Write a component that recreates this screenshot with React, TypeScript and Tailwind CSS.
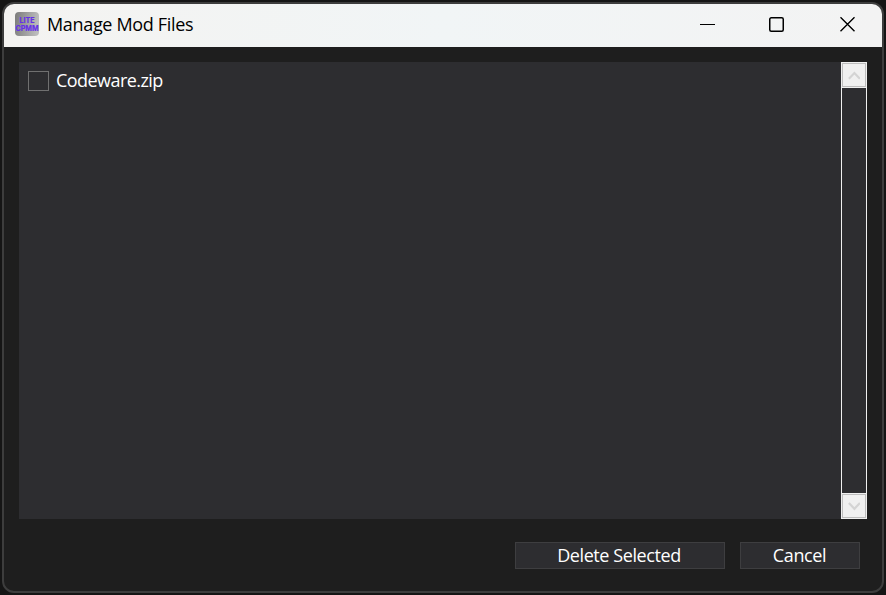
import React from "react";

function AppIcon() {
  return (
    <svg width="24" height="24" viewBox="0 0 24 24" className="shrink-0">
      <defs>
        <linearGradient id="iconShade" x1="0" y1="0" x2="1" y2="0.15">
          <stop offset="0" stopColor="#7b7b7b" />
          <stop offset="1" stopColor="#bcbcbc" />
        </linearGradient>
      </defs>
      <rect width="24" height="24" rx="4" fill="url(#iconShade)" />
      <g fill="#6530e8" stroke="#6530e8" strokeWidth="0.2" fontFamily="Inter, 'Liberation Sans', sans-serif" fontWeight="700" textAnchor="middle">
        <text x="12" y="10.9" fontSize="7.4" textLength="15" lengthAdjust="spacingAndGlyphs">LITE</text>
        <text x="12" y="18.6" fontSize="7.4" textLength="23" lengthAdjust="spacingAndGlyphs">CPMM</text>
      </g>
    </svg>
  );
}

function TitleBar() {
  return (
    <header className="flex h-[43px] shrink-0 items-center bg-linear-to-r from-[#f4f3f1] via-[#f1f5f6] to-[#f3f3f3] pb-[3px] pl-[11px] pr-[26px] text-black">
      <AppIcon />
      <h1 className="ml-2 text-[18px] leading-6 tracking-[-0.33px] whitespace-nowrap">Manage Mod Files</h1>
      <div className="ml-auto flex items-center text-black">
        <button aria-label="Minimize" className="h-4 w-4">
          <svg width="16" height="16" className="block"><path d="M0 8.5H15" stroke="currentColor" /></svg>
        </button>
        <button aria-label="Maximize" className="ml-[53px] h-4 w-4">
          <svg width="16" height="16" className="block"><rect x=".75" y="1.75" width="13.5" height="13.5" rx="1.5" fill="none" stroke="currentColor" strokeWidth="1.5" /></svg>
        </button>
        <button aria-label="Close" className="ml-[55px] h-4 w-4">
          <svg width="16" height="16" className="block"><path d="M.5 1.3 14.5 15.3M14.5 1.3 .5 15.3" stroke="currentColor" strokeWidth="1.4" /></svg>
        </button>
      </div>
    </header>
  );
}

function ScrollButton({ direction }: { direction: "up" | "down" }) {
  return (
    <button aria-label={"Scroll " + direction} className="h-[26px] w-[26px] border border-[#f0f0f0]">
      <span className="flex h-6 w-6 items-center justify-center border border-[#bdbdbd] bg-[#f0f0f0]">
        <svg width="12" height="10" viewBox="0 0 12 10" fill="none" stroke="#d4d4d4" strokeWidth="2.2">
          <path d={direction === "up" ? "M.9 8.8 6.4 3 11.9 8.8" : "M.9 2 6.4 7.8 11.9 2"} />
        </svg>
      </span>
    </button>
  );
}

export default function App() {
  return (
    <div className="h-[595px] w-[886px] bg-[#151515] p-[2px] font-['Open_Sans','Noto_Sans',sans-serif]">
      <div className="flex h-[591px] w-[882px] flex-col overflow-hidden rounded-[12px] border-2 border-[#3d3d3d] bg-[#1e1e1e]">
        <TitleBar />
        <main className="flex flex-1 flex-col pt-[15px] pr-[15px] pl-[15px] text-white">
          <section className="flex h-[457px] bg-[#2d2d30]">
            <div className="flex-1 pt-[7px] pl-[9px]">
              <label className="flex h-6 items-center">
                <span className="h-[20px] w-[21px] border border-[#707070] bg-[#2d2d30]" />
                <span className="ml-[7px] pb-0.5 text-[18px] leading-6 tracking-[-0.55px]">Codeware.zip</span>
              </label>
            </div>
            <div className="flex w-[26px] flex-col">
              <ScrollButton direction="up" />
              <div className="flex-1 border-x border-[#f0f0f0]" />
              <ScrollButton direction="down" />
            </div>
          </section>
          <footer className="mt-[23px] mr-[7px] flex justify-end gap-[15px]">
            <button className="h-[27px] w-[210px] border border-[#3e3e40] bg-[#2d2d30] pr-0.5 text-[18px] leading-[25px] tracking-[-0.42px]">Delete Selected</button>
            <button className="h-[27px] w-[120px] border border-[#3e3e40] bg-[#2d2d30] pr-px text-[18px] leading-[25px] tracking-[-0.4px]">Cancel</button>
          </footer>
        </main>
      </div>
    </div>
  );
}
